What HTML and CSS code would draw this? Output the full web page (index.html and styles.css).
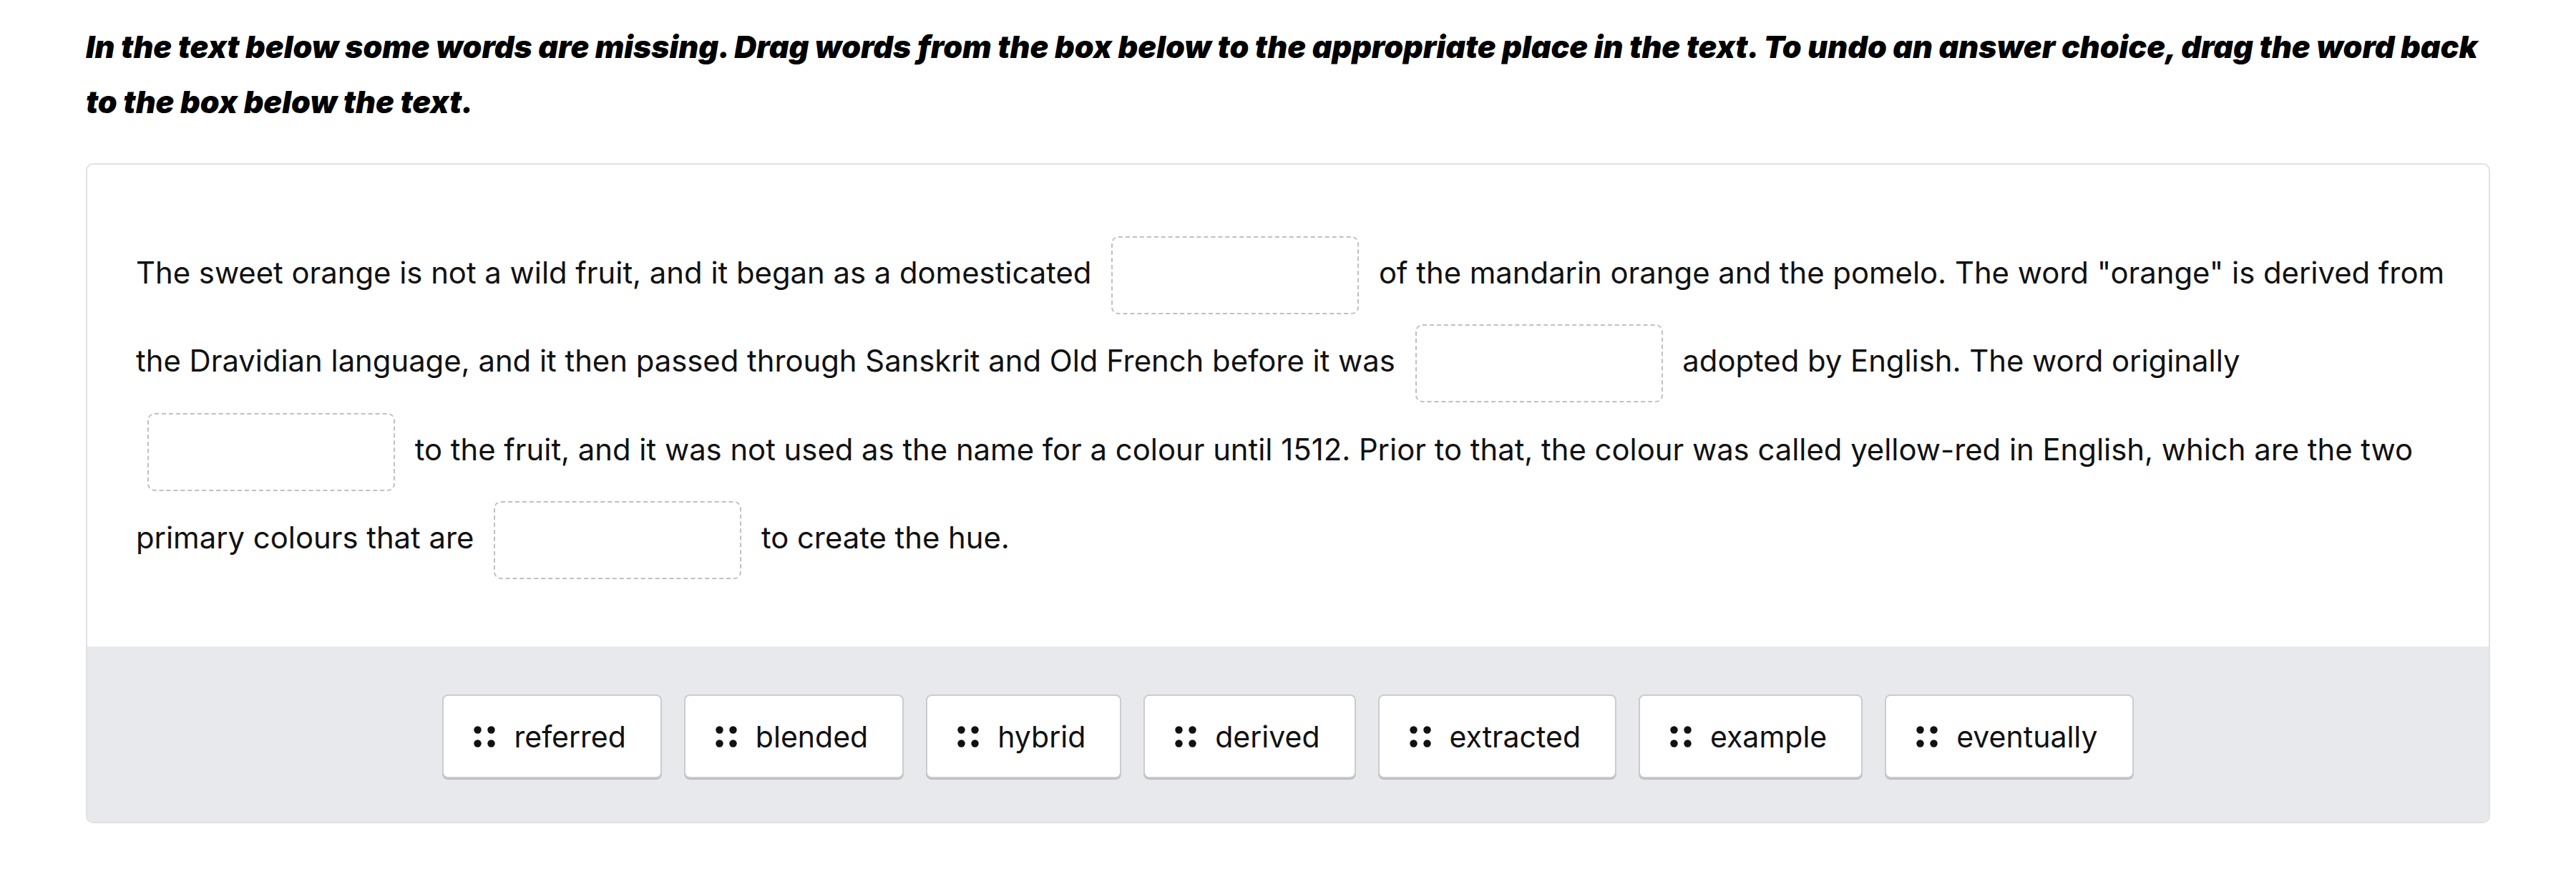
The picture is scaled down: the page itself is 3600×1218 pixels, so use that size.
FILE: index.html
```html
<!DOCTYPE html>
<html lang="en">
<head>
<meta charset="utf-8">
<title>Drag the words</title>
<link rel="stylesheet" href="styles.css">
</head>
<body>
<main class="page">
  <p class="instructions">In the text below some words are missing. Drag words from the box below to the appropriate place in the text. To undo an answer choice, drag the word back to the box below the text.</p>
  <section class="exercise">
    <div class="passage">
      <p>The sweet orange is not a wild fruit, and it began as a domesticated <span class="gap"></span> of the mandarin orange and the pomelo. The word "orange" is derived from the Dravidian language, and it then passed through Sanskrit and Old French before it was <span class="gap"></span> adopted by English. The word originally <span class="gap"></span> to the fruit, and it was not used as the name for a colour until 1512. Prior to that, the colour was called yellow-red in English, which are the two primary colours that are <span class="gap"></span> to create the hue.</p>
    </div>
    <div class="bank">
      <div class="chip"><svg class="grip" viewBox="0 0 30 30" width="30" height="30"><circle cx="5.5" cy="5.5" r="5.2"/><circle cx="24.5" cy="5.5" r="5.2"/><circle cx="5.5" cy="24.5" r="5.2"/><circle cx="24.5" cy="24.5" r="5.2"/></svg><span>referred</span></div>
      <div class="chip"><svg class="grip" viewBox="0 0 30 30" width="30" height="30"><circle cx="5.5" cy="5.5" r="5.2"/><circle cx="24.5" cy="5.5" r="5.2"/><circle cx="5.5" cy="24.5" r="5.2"/><circle cx="24.5" cy="24.5" r="5.2"/></svg><span>blended</span></div>
      <div class="chip"><svg class="grip" viewBox="0 0 30 30" width="30" height="30"><circle cx="5.5" cy="5.5" r="5.2"/><circle cx="24.5" cy="5.5" r="5.2"/><circle cx="5.5" cy="24.5" r="5.2"/><circle cx="24.5" cy="24.5" r="5.2"/></svg><span>hybrid</span></div>
      <div class="chip"><svg class="grip" viewBox="0 0 30 30" width="30" height="30"><circle cx="5.5" cy="5.5" r="5.2"/><circle cx="24.5" cy="5.5" r="5.2"/><circle cx="5.5" cy="24.5" r="5.2"/><circle cx="24.5" cy="24.5" r="5.2"/></svg><span>derived</span></div>
      <div class="chip"><svg class="grip" viewBox="0 0 30 30" width="30" height="30"><circle cx="5.5" cy="5.5" r="5.2"/><circle cx="24.5" cy="5.5" r="5.2"/><circle cx="5.5" cy="24.5" r="5.2"/><circle cx="24.5" cy="24.5" r="5.2"/></svg><span>extracted</span></div>
      <div class="chip"><svg class="grip" viewBox="0 0 30 30" width="30" height="30"><circle cx="5.5" cy="5.5" r="5.2"/><circle cx="24.5" cy="5.5" r="5.2"/><circle cx="5.5" cy="24.5" r="5.2"/><circle cx="24.5" cy="24.5" r="5.2"/></svg><span>example</span></div>
      <div class="chip"><svg class="grip" viewBox="0 0 30 30" width="30" height="30"><circle cx="5.5" cy="5.5" r="5.2"/><circle cx="24.5" cy="5.5" r="5.2"/><circle cx="5.5" cy="24.5" r="5.2"/><circle cx="24.5" cy="24.5" r="5.2"/></svg><span>eventually</span></div>
    </div>
  </section>
</main>
</body>
</html>
```
FILE: styles.css
```css
html, body {
  margin: 0;
  padding: 0;
  background: #ffffff;
}

body {
  font-family: Inter, "Noto Sans", "Liberation Sans", sans-serif;
  color: #111111;
}

.page {
  padding: 27px 120px 0;
}

.instructions {
  margin: 0 0 47px;
  font-size: 43px;
  line-height: 77px;
  font-weight: 900;
  font-style: italic;
  color: #000000;
}

.exercise {
  border: 2px solid #dfe1e4;
  border-radius: 10px;
  overflow: hidden;
  background: #ffffff;
}

.passage {
  padding: 90px 56px 90px 68px;
}

.passage p {
  margin: 0;
  font-size: 41.8px;
  line-height: 123.3px;
}

.gap {
  display: inline-block;
  vertical-align: middle;
  box-sizing: border-box;
  width: 346px;
  height: 109px;
  margin: 0 16px;
  border: 2px dashed #bfc0c3;
  border-radius: 10px;
}

.bank {
  display: flex;
  justify-content: center;
  gap: 31px;
  padding: 67px 0 61px;
  background: #e8e9ec;
}

.chip {
  display: flex;
  align-items: center;
  gap: 26px;
  box-sizing: border-box;
  height: 117px;
  padding: 0 48px 0 42px;
  background: #ffffff;
  border: 2px solid #cbccce;
  border-radius: 8px;
  box-shadow: 0 2px 0 #bcbdc0;
  font-size: 41px;
  color: #111111;
}

.grip {
  display: block;
  flex: none;
  fill: #111111;
}
```
